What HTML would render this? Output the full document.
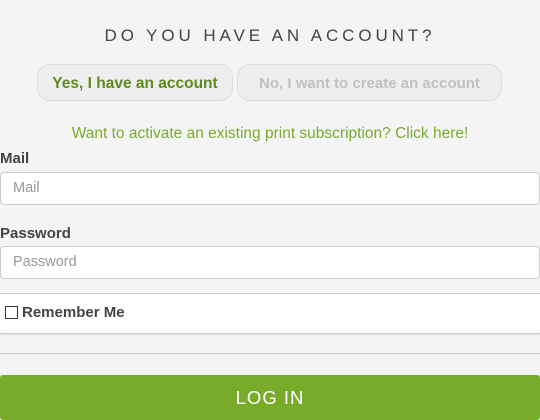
<!DOCTYPE html>
<html><head><style>
*{margin:0;padding:0;box-sizing:border-box}
body{width:540px;height:420px;background:#f4f4f4;font-family:"Liberation Sans",sans-serif;position:relative;overflow:hidden;color:#444}
.a{position:absolute}
h1{position:absolute;top:26px;left:0;width:540px;text-align:center;font-weight:normal;font-size:17px;letter-spacing:3.9px;color:#444}
.b{position:absolute;top:64px;height:37px;border:1px solid #ddd;background:#eee;border-radius:13px;font-weight:bold;font-size:15.5px;text-align:center;line-height:37px}
.lbl{position:absolute;left:0;font-weight:bold;font-size:15px;color:#444}
.in{position:absolute;left:0;width:540px;height:33px;background:#fff;border:1px solid #ccc;border-radius:4px;font-size:14.5px;color:#999;padding-left:12px;line-height:31px}
</style></head><body>
<h1>DO YOU HAVE AN ACCOUNT?</h1>
<div class="b" style="left:37px;width:196px;color:#5e8a1e">Yes, I have an account</div>
<div class="b" style="left:237px;width:265px;color:#c0c0c0;font-size:15px">No, I want to create an account</div>
<div class="a" style="top:125px;left:0;width:540px;text-align:center;font-size:15.5px;color:#7aab2e">Want to activate an existing print subscription? Click here!</div>
<div class="lbl" style="top:150px">Mail</div>
<div class="in" style="top:172px">Mail</div>
<div class="lbl" style="top:225px">Password</div>
<div class="in" style="top:246px">Password</div>
<div class="a" style="top:293px;left:0;width:540px;height:41px;background:#fff;border-top:1px solid #ccc;border-bottom:1px solid #ccc;box-shadow:0 1px 1px #ddd"></div>
<div class="a" style="top:306px;left:5px;width:13px;height:13px;border:1px solid #333;background:#fff"></div>
<div class="a" style="top:304px;left:22px;font-weight:bold;font-size:15px;color:#444">Remember Me</div>
<div class="a" style="top:353px;left:0;width:540px;height:1px;background:#ccc"></div>
<div class="a" style="top:375px;left:0;width:540px;height:45px;background:#79ab2b;border-radius:3px;color:#fff;font-size:18.5px;text-align:center;line-height:45px;letter-spacing:1px">LOG IN</div>
</body></html>
